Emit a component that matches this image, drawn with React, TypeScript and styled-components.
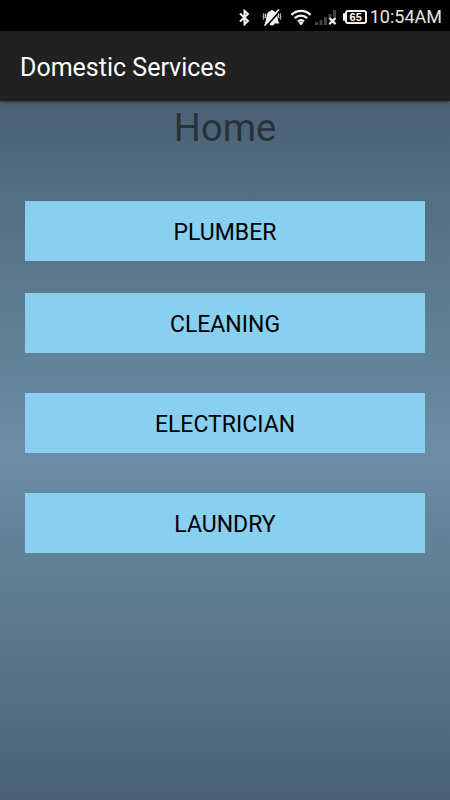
import React from 'react';
import styled, { createGlobalStyle } from 'styled-components';

const GlobalStyle = createGlobalStyle`
  * { box-sizing: border-box; }
  body {
    margin: 0;
    background: #4b6074;
    font-family: Roboto, "Liberation Sans", sans-serif;
  }
`;

const Screen = styled.div`
  min-height: 100vh;
  display: flex;
  flex-direction: column;
`;

const StatusBar = styled.div`
  height: 31px;
  padding: 3px 8px 0 0;
  display: flex;
  align-items: center;
  justify-content: flex-end;
  background: #000;
  color: #e6e6e6;
`;

const StatusIcon = styled.svg<{ $gap: number }>`
  display: block;
  flex: none;
  margin-right: ${({ $gap }) => $gap}px;
`;

const Battery = styled.div`
  position: relative;
  width: 22px;
  height: 14px;
  margin-right: 3px;
  border: 2px solid #f2f2f2;
  border-radius: 3px;
  color: #fff;
  font: 700 11px/10px "Liberation Sans", sans-serif;
  text-align: center;

  &::before {
    content: "";
    position: absolute;
    left: -4px;
    top: 1px;
    width: 2px;
    height: 8px;
    border-radius: 1px 0 0 1px;
    background: #f2f2f2;
  }
`;

const Clock = styled.time`
  font-size: 18px;
  line-height: 24px;
`;

const AppBar = styled.header`
  height: 70px;
  padding: 4px 20px 0;
  display: flex;
  align-items: center;
  background: #212121;
  box-shadow: 0 1px 3px rgba(0, 0, 0, 0.5);
  z-index: 1;
`;

const AppTitle = styled.span`
  color: #fff;
  font-size: 25px;
  line-height: 32px;
`;

const Content = styled.main`
  flex: 1;
  padding: 3px 25px 40px;
  background: linear-gradient(#4b6074 0%, #536f82 14%, #6c8da6 50%, #536f82 86%, #4b6074 100%);
`;

const Heading = styled.h1`
  margin: 0 0 49px;
  color: #27323b;
  font-size: 38px;
  font-weight: 400;
  line-height: 48px;
  text-align: center;
`;

const Services = styled.nav`
  display: grid;
  grid-template-rows: 60px 32px 60px 40px 60px 40px 60px;
`;

const ServiceButton = styled.button<{ $row: number }>`
  grid-row: ${({ $row }) => $row};
  padding: 4px 0 0;
  border: 0;
  background: #89cff0;
  color: #000;
  font-family: inherit;
  font-size: 23px;
  line-height: 28px;
  text-transform: uppercase;
  cursor: pointer;
`;

const services = ['Plumber', 'Cleaning', 'Electrician', 'Laundry'];

function BluetoothIcon() {
  return (
    <StatusIcon $gap={12} width="11" height="17" viewBox="0 0 11 17" fill="none" stroke="#f2f2f2" strokeWidth="2" aria-label="Bluetooth">
      <path d="M1 4.500 9 12 5.500 15.200V1.800L9 5 1 12.500" />
    </StatusIcon>
  );
}

function SilentIcon() {
  return (
    <StatusIcon $gap={8} width="20" height="17" viewBox="0 0 20 17" fill="none" aria-label="Silent">
      <path d="M2.500 14.500C4.500 12.500 4 7.500 5.200 4.800 6 2.800 7.500 2.400 8.500 2c.6-1.300 2.400-1.300 3 0 1 .4 2.500.8 3.300 2.800 1.200 2.700.7 7.700 2.700 9.700ZM7.500 14h5a2.500 2.500 0 0 1-5 0Z" fill="#f2f2f2" />
      <path d="m4 17.500 14.500-16" stroke="#000" strokeWidth="1.800" />
      <path d="M2.500 16.500 17 .5" stroke="#f2f2f2" strokeWidth="1.700" />
      <path d="m1 4.500 1 1.500-1 1.500 1 1.500-1 1.500M3.200 4.500l.5 1.500-.5 1.500.5 1.500M19 4.500 18 6l1 1.500L18 9l1 1.500M16.800 4.500l-.5 1.500.5 1.500-.5 1.500" stroke="#ccc" strokeWidth="1.100" />
    </StatusIcon>
  );
}

function WifiIcon() {
  return (
    <StatusIcon $gap={3} width="22" height="17" viewBox="0 0 22 17" fill="none" stroke="#f2f2f2" strokeWidth="2.400" aria-label="Wi-Fi">
      <path d="M1.500 5.800a13.500 13.500 0 0 1 19 0M4.800 9.200a8.800 8.800 0 0 1 12.400 0M8 12.500a4.300 4.300 0 0 1 6 0" />
      <path d="m8.500 13.600 2.500-1 2.500 1L11 16.500Z" fill="#f2f2f2" stroke="none" />
    </StatusIcon>
  );
}

function SignalIcon() {
  return (
    <StatusIcon $gap={8} width="22" height="17" viewBox="0 0 22 17" aria-label="No signal">
      <path d="M0 13h3v3H0zM4.500 11h3v5h-3zM9 8h3v8H9zM13.500 5h3v11h-3zM18 1h3v15h-3z" fill="#444" />
      <path d="m14.500 9 6 6m0-6-6 6" stroke="#000" strokeWidth="4" />
      <path d="m14.500 9 6 6m0-6-6 6" stroke="#f2f2f2" strokeWidth="2.400" />
    </StatusIcon>
  );
}

export default function App() {
  return (
    <>
      <GlobalStyle />
      <Screen>
        <StatusBar>
          <BluetoothIcon />
          <SilentIcon />
          <WifiIcon />
          <SignalIcon />
          <Battery>65</Battery>
          <Clock dateTime="10:54">10:54AM</Clock>
        </StatusBar>
        <AppBar>
          <AppTitle>Domestic Services</AppTitle>
        </AppBar>
        <Content>
          <Heading>Home</Heading>
          <Services aria-label="Services">
            {services.map((service, i) => (
              <ServiceButton key={service} type="button" $row={i * 2 + 1}>
                {service}
              </ServiceButton>
            ))}
          </Services>
        </Content>
      </Screen>
    </>
  );
}
